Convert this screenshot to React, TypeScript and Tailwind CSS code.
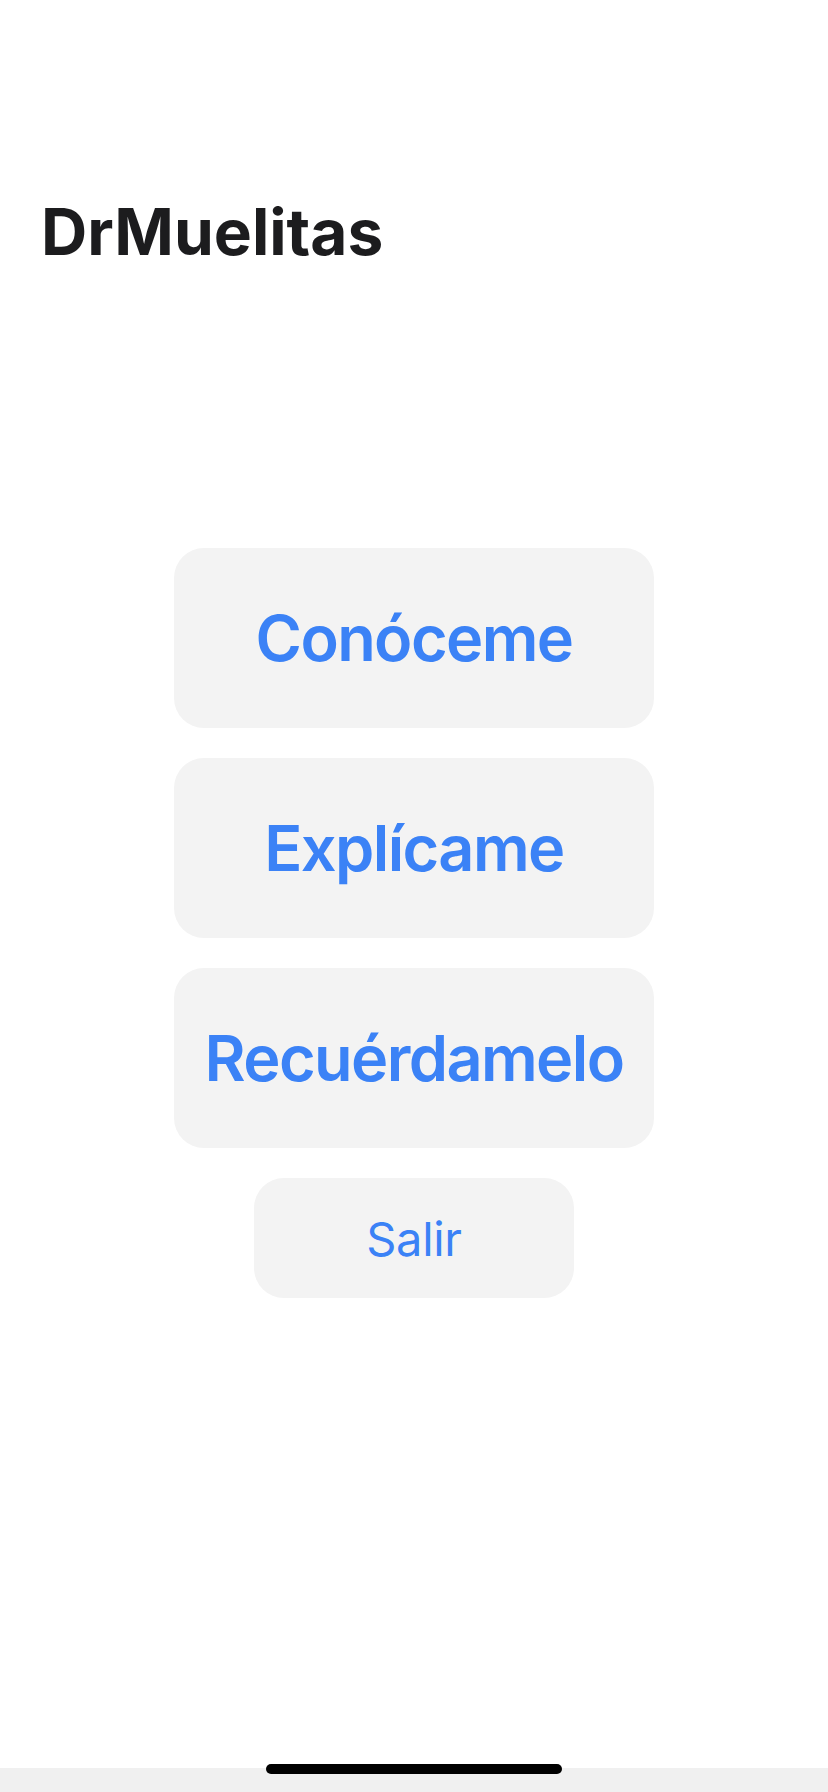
const menu = ['Conóceme', 'Explícame', 'Recuérdamelo']

export default function App() {
  return (
    <div className="relative flex h-[1792px] w-[828px] flex-col bg-white font-['Inter',sans-serif]">
      <div className="flex flex-1 flex-col">
        <h1 className="pl-[41px] pt-[200px] text-[64px] font-bold leading-none text-[#1c1c1e]">
          DrMuelitas
        </h1>

        <div className="mt-[284px] flex flex-col items-center gap-[30px]">
          {menu.map((label) => (
            <button
              key={label}
              className="flex h-[180px] w-[480px] items-center justify-center rounded-[30px] bg-[#f3f3f3] text-[63px] font-semibold leading-none tracking-[-1.6px] text-[#3b82f6]"
            >
              {label}
            </button>
          ))}
          <button className="flex h-[120px] w-[320px] items-center justify-center rounded-[30px] bg-[#f3f3f3] text-[47px] font-normal leading-none tracking-[-0.3px] text-[#3b82f6]">
            Salir
          </button>
        </div>
      </div>

      <div className="h-[24px] bg-[#f0f0f0]" />
      {/* home indicator */}
      <div className="absolute bottom-[18px] left-1/2 h-[10px] w-[296px] -translate-x-1/2 rounded-full bg-black" />
    </div>
  )
}
